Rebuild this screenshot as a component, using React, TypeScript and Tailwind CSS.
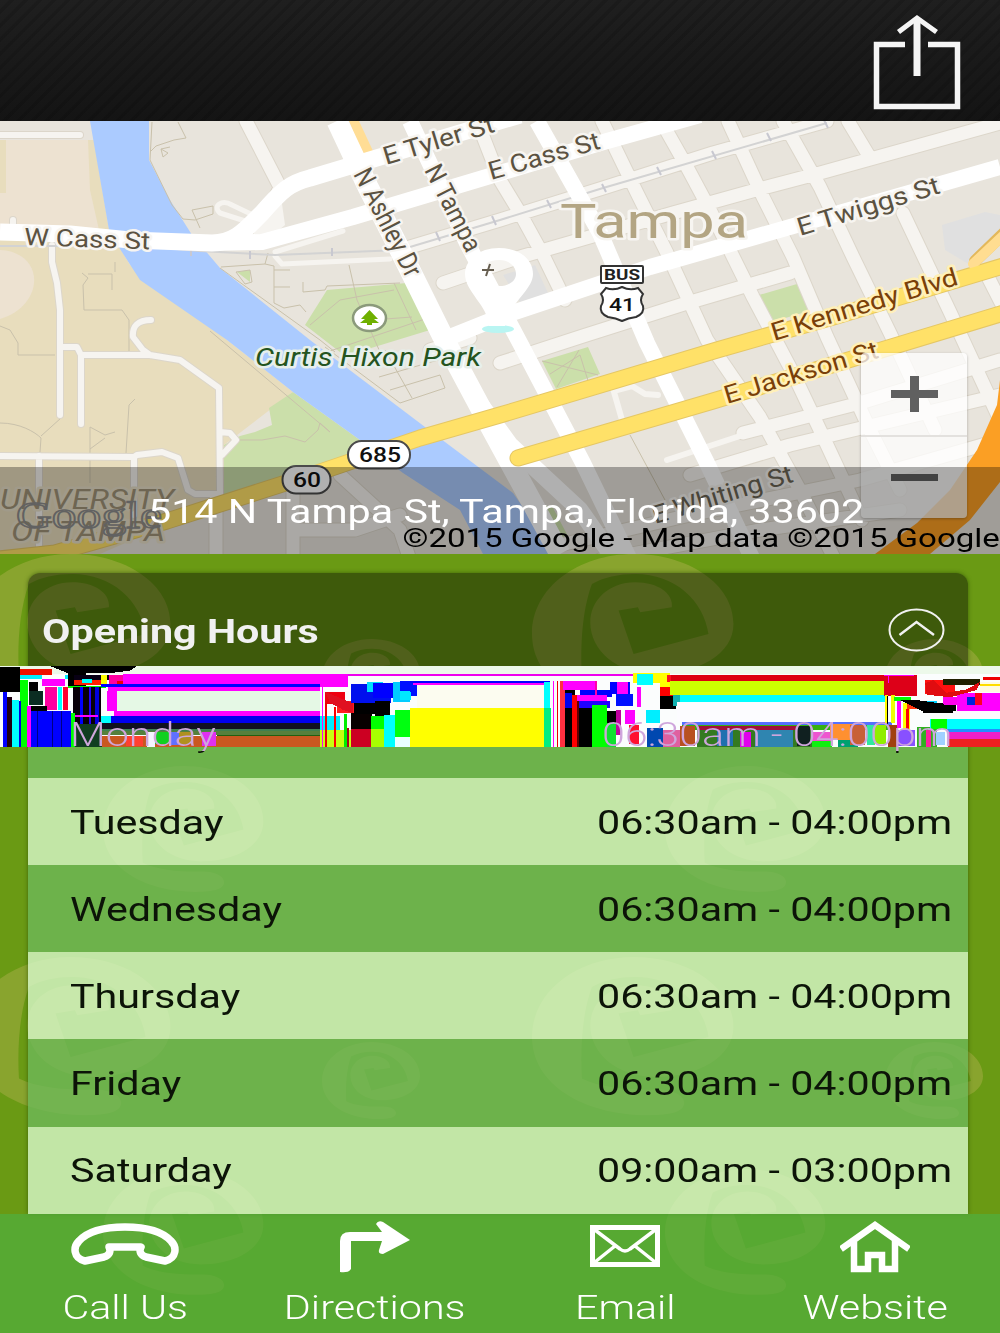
import type { ReactNode } from 'react'

interface Hours {
  day: string
  time: string
}

interface LabelProps {
  x: number
  y: number
  w: number
  size: number
  rotate?: number
  color?: string
  halo?: string
  italic?: boolean
  weight?: number
  children: string
}

const hours: Hours[] = [
  { day: 'Monday', time: '06:30am - 04:00pm' },
  { day: 'Tuesday', time: '06:30am - 04:00pm' },
  { day: 'Wednesday', time: '06:30am - 04:00pm' },
  { day: 'Thursday', time: '06:30am - 04:00pm' },
  { day: 'Friday', time: '06:30am - 04:00pm' },
  { day: 'Saturday', time: '09:00am - 03:00pm' },
]

const minorRoads = [
  'M246 121L280 187L268 215',
  'M477 121L500 180L520 213L543 255L565 300',
  'M602 121L637 193L667 253L707 340L760 417L800 490L835 560',
  'M661 121L687 167L710 210L753 297L793 373L820 430L862 520',
  'M728 121L763 197L793 257L827 337L870 430L900 490',
  'M783 121L820 187L853 257L890 333L935 430',
  'M848 121L869 156',
  'M903 213L950 312L1000 420',
  'M987 275L1010 320',
  'M400 250L500 220L603 188L713 153L827 121',
  'M443 283L520 257L673 213L763 188L820 173L1000 123',
  'M500 363L583 336L687 303L790 273',
  'M430 350L470 338',
  'M743 433L860 403L1000 360',
  'M690 475L790 445L1000 395',
  'M560 545L690 515L860 480L1000 440',
  'M600 560L760 530L900 510',
  'M340 475L400 530L410 560',
  'M300 530L355 530L400 515',
  'M216 500L216 560',
  'M293 490L293 560',
]

const whiteRoads = [
  'M410 121L467 243L520 343L583 463L630 560',
  'M537 121L600 233L647 343L707 463L753 560',
  'M445 339L500 317L650 267L1000 167',
]

const campusRoads = [
  'M0 135L80 135',
  'M52 245L52 262L57 283L60 310L60 415',
  'M60 347L77 347L81 355L81 424',
  'M81 355L150 355L180 360L219 388L220 494L195 494L188 490L178 458L162 452L137 455L134 457L0 456',
  'M151 320C138 320 132 326 133 337L143 350L150 355',
  'M220 432L230 433L236 440L222 455',
  'M39 456L39 546',
  'M134 457L134 515',
  'M13 220L13 235',
]

const footpaths = [
  'M152 122L150 160L172 205L183 219L195 220L213 214L213 206L192 210L200 228',
  'M150 152L156 146L174 140L186 138L178 122',
  'M161 149L168 153L163 157L161 149L170 147',
  'M220 268L320 340L335 352',
  'M221 267L265 264L268 253M265 264L274 266L274 303',
  'M236 272L250 270L252 282L245 284Z',
  'M274 270L290 270M274 287L290 287M303 282L303 292L325 290L327 286L400 283',
  'M349 265L357 300L380 352',
  'M310 325L340 300L394 290M327 352L428 318M394 283L416 330M372 320L412 317',
  'M274 303L284 308L300 305L306 312',
  'M82 273L88 278L83 285L84 310L122 310L129 320L129 352M88 274L112 274L112 290M115 262L115 272',
  'M0 326L10 330L18 343L18 355L55 355',
  'M0 423C20 423 35 432 41 438L40 452M61 418L41 436',
  'M90 427L90 483M90 427L105 435L115 432M90 449L105 438M126 453L129 405L135 399',
  'M240 440L262 440L285 436L305 442L318 430L320 423L330 432',
  'M210 331L330 432',
  'M379 377L445 358M390 390L440 375L445 388L400 403L325 347M385 350L412 398',
  'M550 374L580 355L590 387M542 361L598 375M579 350L557 387',
  'M630 435L665 500M955 333L970 362',
]

// coloured noise of the damaged frame: [x, y, width, height, colour]
const noise: [number, number, number, number, string][] = [
  [0, 18, 3000, 24, '#edf9ea'],
  [0, 42, 3000, 220, '#fbfdfd'],
  [0, 20, 60, 75, '#000000'],
  [60, 26, 95, 22, '#ee1100'],
  [60, 46, 160, 12, '#00eeff'],
  [60, 60, 25, 202, '#00ff00'],
  [10, 95, 12, 167, '#0000ff'],
  [22, 110, 14, 152, '#200010'],
  [36, 120, 20, 142, '#00ffff'],
  [56, 122, 6, 140, '#0000dd'],
  [88, 66, 25, 50, '#000000'],
  [88, 92, 40, 44, '#0b2d22'],
  [126, 46, 70, 12, '#ffffff'],
  [126, 58, 70, 20, '#ff00ff'],
  [136, 80, 36, 70, '#ff00a0'],
  [174, 80, 12, 70, '#00ffff'],
  [188, 80, 16, 70, '#ff0030'],
  [92, 138, 50, 18, '#000000'],
  [92, 154, 122, 108, '#0000ff'],
  [80, 138, 12, 124, '#ff00ff'],
  [110, 154, 3, 108, '#000080'],
  [155, 154, 3, 108, '#000080'],
  [184, 154, 3, 108, '#000080'],
  [204, 40, 55, 42, '#000000'],
  [222, 46, 110, 14, '#080014'],
  [222, 60, 80, 16, '#ff2200'],
  [245, 58, 30, 12, '#00ffff'],
  [204, 78, 115, 5, '#00ff00'],
  [220, 82, 84, 110, '#080008'],
  [240, 82, 10, 110, '#0000ff'],
  [268, 82, 6, 110, '#2200ff'],
  [286, 82, 12, 110, '#0000dd'],
  [225, 164, 70, 6, '#ff00ff'],
  [214, 158, 12, 104, '#00ff00'],
  [304, 46, 16, 34, '#ffff00'],
  [328, 44, 40, 36, '#ff00a0'],
  [352, 62, 28, 22, '#ee0000'],
  [368, 42, 592, 30, '#ff00ff'],
  [304, 72, 656, 8, '#0000ff'],
  [325, 80, 635, 12, '#ff00ff'],
  [345, 92, 615, 60, '#e5f8e5'],
  [322, 94, 28, 60, '#ff00ff'],
  [342, 152, 618, 16, '#ff00ff'],
  [304, 168, 656, 22, '#0000ee'],
  [304, 168, 30, 22, '#00ffff'],
  [304, 190, 656, 17, '#101020'],
  [304, 207, 656, 6, '#3d8050'],
  [304, 213, 656, 12, '#55803c'],
  [650, 225, 310, 4, '#206010'],
  [304, 229, 656, 33, '#c95820'],
  [225, 193, 80, 69, '#103d20'],
  [378, 227, 50, 30, '#ff4030'],
  [440, 215, 24, 46, '#f4f4ff'],
  [464, 215, 42, 36, '#10d020'],
  [506, 215, 30, 40, '#6070ff'],
  [536, 215, 38, 38, '#b09020'],
  [605, 215, 43, 44, '#e030f0'],
  [960, 42, 85, 40, '#ff00ff'],
  [1045, 42, 860, 5, '#ee00ee'],
  [962, 82, 85, 12, '#ffffff'],
  [975, 95, 60, 38, '#ee0010'],
  [1010, 122, 52, 38, '#ff2020'],
  [960, 168, 60, 42, '#00eeff'],
  [960, 210, 92, 52, '#c8ff10'],
  [966, 82, 3, 180, '#ff00ff'],
  [976, 130, 4, 132, '#ee0000'],
  [1002, 140, 6, 122, '#ff0000'],
  [1032, 162, 10, 100, '#00ee00'],
  [1040, 205, 8, 57, '#aa0020'],
  [1053, 160, 62, 102, '#080000'],
  [1053, 206, 60, 56, '#cc0022'],
  [1053, 72, 120, 56, '#0010ee'],
  [1062, 130, 70, 32, '#000000'],
  [1100, 66, 50, 30, '#00ddff'],
  [1120, 68, 90, 46, '#0000ff'],
  [1180, 66, 50, 60, '#00ccff'],
  [1200, 62, 50, 46, '#0010ff'],
  [1125, 124, 44, 46, '#000000'],
  [1112, 168, 120, 94, '#00ff00'],
  [1112, 206, 118, 56, '#a8ff00'],
  [1152, 164, 34, 98, '#00ffff'],
  [1186, 150, 44, 112, '#00ff10'],
  [1186, 230, 44, 32, '#eaffff'],
  [1200, 94, 32, 26, '#00e8ff'],
  [1230, 62, 420, 8, '#0000ff'],
  [1240, 70, 400, 5, '#ff00ff'],
  [1250, 75, 382, 69, '#fcfcf0'],
  [1230, 144, 402, 118, '#ffff00'],
  [1632, 66, 18, 78, '#00ffff'],
  [1632, 144, 20, 118, '#00ee80'],
  [1660, 64, 3, 198, '#ff00ff'],
  [1670, 64, 4, 198, '#ee0000'],
  [1680, 64, 14, 198, '#ff3040'],
  [1690, 64, 95, 26, '#ff00ff'],
  [1694, 90, 30, 172, '#000000'],
  [1716, 106, 18, 156, '#ff0000'],
  [1732, 106, 6, 156, '#600000'],
  [1740, 90, 95, 20, '#0000ff'],
  [1730, 106, 90, 16, '#ff00ff'],
  [1696, 100, 20, 44, '#0000ee'],
  [1736, 122, 95, 22, '#2000ff'],
  [1736, 144, 42, 118, '#000000'],
  [1776, 134, 44, 128, '#00ff00'],
  [1784, 64, 8, 42, '#ff00aa'],
  [1830, 66, 60, 36, '#0000ff'],
  [1850, 66, 34, 36, '#ff00ff'],
  [1820, 154, 28, 34, '#000000'],
  [1820, 188, 28, 74, '#10e030'],
  [1848, 150, 20, 76, '#c000a0'],
  [1848, 102, 50, 35, '#0010ff'],
  [1862, 142, 10, 90, '#ffffff'],
  [1875, 150, 30, 42, '#ff00ff'],
  [1888, 195, 30, 58, '#ff1030'],
  [1900, 38, 80, 30, '#ffff00'],
  [1910, 42, 48, 34, '#00ffff'],
  [1912, 80, 10, 60, '#ff00ff'],
  [1938, 150, 42, 40, '#00eeff'],
  [1940, 205, 50, 57, '#0048b0'],
  [1980, 38, 30, 58, '#ffff00'],
  [1980, 80, 42, 30, '#ff0000'],
  [1980, 108, 48, 40, '#000000'],
  [2020, 88, 22, 50, '#10b0b0'],
  [2002, 45, 24, 22, '#ff1020'],
  [2012, 45, 650, 18, '#dd0010'],
  [2010, 64, 644, 40, '#ccff00'],
  [2040, 106, 625, 20, '#00ffff'],
  [2030, 126, 620, 60, '#fcfcff'],
  [2045, 187, 630, 8, '#5570ff'],
  [2045, 195, 630, 14, '#35b010'],
  [2090, 197, 300, 12, '#a01038'],
  [2090, 209, 350, 53, '#347a20'],
  [1988, 209, 52, 53, '#e060a0'],
  [2040, 197, 46, 60, '#b85020'],
  [2150, 209, 50, 48, '#2070b0'],
  [2220, 215, 34, 47, '#e000ee'],
  [2264, 209, 116, 53, '#2f85b0'],
  [2390, 197, 40, 60, '#102020'],
  [2435, 215, 60, 28, '#ee55d0'],
  [2435, 243, 60, 19, '#10f010'],
  [2490, 193, 68, 46, '#ff9030'],
  [2515, 239, 60, 23, '#00a070'],
  [2550, 195, 46, 60, '#c86038'],
  [2600, 195, 26, 60, '#30e8a0'],
  [2622, 195, 36, 58, '#90ee00'],
  [2652, 45, 100, 62, '#dd0018'],
  [2652, 45, 90, 4, '#ff00ff'],
  [2664, 45, 4, 25, '#ff00ff'],
  [2654, 106, 10, 84, '#ffff00'],
  [2672, 106, 12, 84, '#eeff00'],
  [2662, 108, 3, 90, '#000000'],
  [2682, 110, 50, 14, '#00ff00'],
  [2692, 124, 10, 80, '#ff00ff'],
  [2710, 130, 20, 80, '#ffff00'],
  [2718, 146, 8, 60, '#ff0000'],
  [2664, 195, 26, 67, '#a04010'],
  [2695, 209, 50, 50, '#8850ff'],
  [2750, 200, 60, 62, '#30b020'],
  [2778, 209, 14, 53, '#ff20a0'],
  [2808, 215, 26, 40, '#a0d0ff'],
  [2750, 124, 60, 5, '#00d0ff'],
  [2776, 60, 90, 42, '#ff1010'],
  [2830, 58, 110, 18, '#202000'],
  [2720, 126, 70, 22, '#ff3810'],
  [2768, 130, 100, 30, '#000000'],
  [2830, 112, 110, 22, '#ff00ee'],
  [2870, 100, 130, 52, '#ff00ff'],
  [2900, 110, 26, 25, '#0020dd'],
  [2925, 98, 20, 38, '#ff0020'],
  [2950, 52, 50, 8, '#ee0000'],
  [2940, 66, 60, 30, '#fffbe0'],
  [2940, 72, 60, 6, '#ffdd00'],
  [2860, 152, 140, 24, '#fdfaff'],
  [2790, 176, 210, 32, '#00ffff'],
  [2792, 176, 50, 32, '#00ff00'],
  [2840, 208, 160, 8, '#2090ff'],
  [2845, 216, 155, 22, '#ee20c8'],
  [2845, 238, 155, 24, '#ee2020'],
]

const markPath =
  'M305 0C470 0 605 90 605 210C605 300 500 360 370 360C255 360 175 290 175 205C175 140 230 85 310 85C380 85 425 120 420 160L325 175L318 160L260 170L305 300L530 240C515 140 430 60 310 60C260 60 215 70 180 90C150 170 145 280 150 365C210 395 300 400 380 398C420 398 457 415 457 438C457 465 420 475 350 475C150 475 0 380 0 240C0 100 140 0 305 0Z'

const marks: [number, number, number][] = [
  [-31, 0, 0.333],
  [532, 0, 0.333],
  [322, 85, 0.162],
  [885, 85, 0.162],
  [103, 212, 0.265],
  [665, 212, 0.265],
  [-31, 403, 0.333],
  [532, 403, 0.333],
  [322, 488, 0.162],
  [885, 488, 0.162],
  [103, 615, 0.265],
  [665, 615, 0.265],
]

function Label({ x, y, w, size, rotate = 0, color = '#5b5241', halo = '#f7f5f1', italic, weight = 400, children }: LabelProps) {
  return (
    <text
      transform={`translate(${x} ${y}) rotate(${rotate})`}
      textLength={w}
      lengthAdjust="spacingAndGlyphs"
      fontFamily="Roboto, sans-serif"
      fontSize={size}
      fontWeight={weight}
      fontStyle={italic ? 'italic' : 'normal'}
      fill={color}
      stroke={halo}
      strokeWidth={halo === 'none' ? 0 : 5}
      strokeLinejoin="round"
      paintOrder="stroke"
    >
      {children}
    </text>
  )
}

function ParkMap() {
  return (
    <svg className="block h-full w-full" viewBox="0 121 1000 433" preserveAspectRatio="none" fill="none">
      <rect y="121" width="1000" height="433" fill="#e8e4dc" />
      <path d="M0 228H108L130 265L227 340L293 392L224 445V500L100 554H0Z" fill="#e8ddbd" />
      <path d="M0 140H93L108 232H0Z" fill="#ede2d1" />
      <path d="M88 140H94L109 230H99L90 190ZM0 140H6V193H0Z" fill="#e8ddbd" />
      <path d="M0 250C45 252 46 305 0 319Z" fill="#ede2d1" />
      <path d="M293 392L269 408L272 425L255 432L240 436L224 445V500L370 455L360 440Z" fill="#cbdfaa" />
      <path d="M90 121L109 230L120 249L140 280L227 340L293 392L360 440L403 473L460 510L483 554H550L532 520L513 493L425 427L310 340L220 268L192 235L170 200L149 160V121Z" fill="#abcbff" />
      <path d="M327 290L407 283L430 330L345 356L305 325ZM237 272L250 270V282ZM542 361L588 347L600 374L556 389ZM759 295L797 284L809 311L772 322ZM530 506L552 506L570 540L545 545Z" fill="#cbdfaa" />
      <path d="M942 225L985 212L1000 215V240L970 265L945 250ZM503 275L535 265L548 293L520 302Z" fill="#e0e0e0" />

      <g stroke="#c9c1ab" strokeWidth="1">
        {footpaths.map((d) => (
          <path key={d} d={d} />
        ))}
      </g>
      <g stroke="#dcd6ca" strokeLinejoin="round" strokeLinecap="round">
        <path d={minorRoads.join('')} strokeWidth="15" />
        <path d={campusRoads.join('')} strokeWidth="8" />
      </g>
      <g stroke="#f6f4f0" strokeLinejoin="round" strokeLinecap="round">
        <path d={minorRoads.join('')} strokeWidth="13" />
        <path d={campusRoads.join('')} strokeWidth="6" />
        <path d="M667 460L740 436M617 390L632 386L645 394L658 395M612 385L622 420" strokeWidth="6" />
        <path d="M275 256L282 264L390 259M275 252L343 231M245 221L220 213C212 206 222 199 232 205L255 216" strokeWidth="5" />
      </g>
      <path d="M253 216L280 190L285 225L255 250Z" fill="#f6f4f0" />
      <path d="M0 246L140 246L200 251L275 255L400 250L440 238L500 220L603 188L827 123" stroke="#d3d3d3" strokeWidth="2" />
      <path d="M191 248V256M250 251V259M332 248V256M436 232L440 241M492 216L496 225M547 200L551 208M602 184L606 192M657 167L661 175M712 151L716 159M767 133L771 141M824 120L828 128" stroke="#c8c8d0" strokeWidth="2" />

      <path d="M349 121H359L373 151L362 154Z" fill="#ffdd95" />
      <g stroke="#ffffff" strokeLinejoin="round">
        <path d={whiteRoads.join('')} strokeWidth="16" />
        <path d="M337 121L368 187L405 260L447 345L487 420L560 554" strokeWidth="21" />
        <path d="M470 390L510 445L580 510L615 560" strokeWidth="17" />
        <path d="M0 232L70 234L130 240L212 243C235 243 245 230 262 213C282 190 290 183 310 178L520 115" strokeWidth="17" />
        <path d="M210 243L262 242L353 217L500 173L600 143L700 115" strokeWidth="16" />
      </g>
      <g strokeLinejoin="round" strokeLinecap="round">
        <path d="M-10 560L55 553L167 521L317 473L420 438L500 415L717 350L833 317L1010 264M518 458L713 401L1010 311" stroke="#e5c765" strokeWidth="17" />
        <path d="M975 261L1005 232" stroke="#e3b85c" strokeWidth="12" />
        <path d="M973 264L1005 234" stroke="#ffdd91" strokeWidth="10" />
        <path d="M-10 560L55 553L167 521L317 473L420 438L500 415L717 350L833 317L1010 264M518 458L713 401L1010 311" stroke="#ffe168" strokeWidth="15" />
      </g>
      <path d="M1000 380L997 405L977 450L950 490L917 523L875 554H930L970 520L1000 482Z" fill="#fb9f24" />

      <Label x={24} y={245} w={126} size={24} rotate={2}>W Cass St</Label>
      <Label x={386} y={165} w={115} size={25} rotate={-17}>E Tyler St</Label>
      <Label x={491} y={180} w={115} size={25} rotate={-16}>E Cass St</Label>
      <Label x={353} y={174} w={118} size={27} rotate={63}>N Ashley Dr</Label>
      <Label x={424} y={170} w={94} size={26} rotate={63}>N Tampa</Label>
      <Label x={800} y={236} w={148} size={25} rotate={-17}>E Twiggs St</Label>
      <Label x={774} y={341} w={194} size={25} rotate={-17} color="#7a4008" halo="#fff0b8">E Kennedy Blvd</Label>
      <Label x={727} y={404} w={160} size={25} rotate={-17} color="#7a4008" halo="#fff0b8">E Jackson St</Label>
      <Label x={655} y={524} w={146} size={25} rotate={-17} color="#6b6454">E Whiting St</Label>
      <Label x={560} y={238} w={188} size={49} color="#b3a583">Tampa</Label>
      <Label x={255} y={366} w={226} size={26} color="#245420" halo="#e7efeb" italic>Curtis Hixon Park</Label>
      <Label x={0} y={509} w={174} size={27} color="#a09377" halo="#e8e0c8" italic>UNIVERSITY</Label>
      <Label x={11} y={541} w={154} size={27} color="#a09377" halo="#e8e0c8" italic>OF TAMPA</Label>

      <ellipse cx="369.500" cy="318" rx="16.500" ry="13" fill="#fff" stroke="#8b9a7b" strokeWidth="2.500" />
      <path d="M369.500 310L378 319H374L379 323H372V325H367V323H360L365 319H361Z" fill="#6fb000" />

      <rect x="348" y="441" width="62" height="27.500" rx="13.500" fill="#fff" stroke="#4b4b4b" strokeWidth="2" />
      <Label x={359} y={462} w={42} size={20} color="#111" halo="none" weight={500}>685</Label>
      <rect x="282.500" y="466" width="48" height="27.500" rx="13.500" fill="#fff" stroke="#4b4b4b" strokeWidth="2" />
      <Label x={293} y={487} w={28} size={20} color="#111" halo="none" weight={500}>60</Label>
      <rect x="601" y="266" width="42" height="17" rx="1" fill="#fff" stroke="#333" strokeWidth="2" />
      <Label x={604} y={280} w={36} size={15} color="#222" halo="none" weight={700}>BUS</Label>
      <path d="M606 288Q614 291 622 287Q630 291 638 288L643 294Q639 300 643 306Q645 313 636 317Q628 318 622 321Q616 318 608 317Q599 313 601 306Q605 300 601 294Z" fill="#fff" stroke="#333" strokeWidth="2" />
      <Label x={609} y={311} w={26} size={19} color="#111" halo="none" weight={500}>41</Label>

      <ellipse cx="498" cy="329" rx="16" ry="4" fill="#b9f5f2" />
      <path fillRule="evenodd" d="M499 248C519 248 533 259 533 274C533 290 510 302 505 326H489C488 305 465 292 465 274C465 259 480 248 499 248ZM499 260C488 260 481 266 481 274C481 281 489 286 499 286C509 286 516 281 516 274C516 266 509 260 499 260Z" fill="#fff" />
      <path d="M482 270H494M490 264L486 276" stroke="#665e50" strokeWidth="2" />
      <text x="16" y="528" textLength="146" lengthAdjust="spacingAndGlyphs" fontFamily="'Liberation Serif', serif" fontSize="37" fill="none" stroke="#8d8d8d" strokeWidth="1.500">Google</text>
    </svg>
  )
}

function ShareIcon() {
  return (
    <svg className="h-[98px] w-[92px]" viewBox="0 0 92 98" fill="none" stroke="#f5f5f5">
      <path d="M35 30.500H6.500V92.500H87.500V30.500H58" strokeWidth="5.500" />
      <path d="M47 62V5" strokeWidth="7" />
      <path d="M28.500 18L47 4L66.500 18" strokeWidth="5" />
    </svg>
  )
}

function BrokenFrame() {
  return (
    <div className="absolute inset-x-0 top-[112px] z-10 h-[81px]">
      <svg className="block h-full w-full" viewBox="0 18 3000 243" preserveAspectRatio="none" shapeRendering="crispEdges">
        {noise.map(([x, y, w, h, fill], i) => (
          <rect key={i} x={x} y={y} width={w} height={h} fill={fill} />
        ))}
        <path d="M150 18H410L390 32L340 38H200L170 26Z" fill="#000" />
        <path d="M975 95L990 128L1030 150L1060 160V130L1030 118Z" fill="#e01020" />
        <path d="M1230 75L1250 75L1230 98Z" fill="#0010ff" />
        <path d="M2700 120L2780 160L2850 158L2870 145L2820 130L2750 120Z" fill="#000" />
        <path d="M2776 70L2800 60L2840 98L2900 88L2940 66L2930 90L2850 112L2780 104Z" fill="#e00c10" />
      </svg>
    </div>
  )
}

function Action({ label, children }: { label: string; children: ReactNode }) {
  return (
    <div className="flex flex-1 flex-col items-center">
      <div className="flex h-[65px] items-center justify-center">{children}</div>
      <span className="mt-[7px] scale-x-[1.25] text-[33px] leading-[44px] font-light whitespace-nowrap">{label}</span>
    </div>
  )
}

export default function App() {
  return (
    <div className="relative h-[1333px] w-[1000px] overflow-hidden bg-[#6a9a14] font-['Roboto',sans-serif]">
      <header className="flex h-[121px] justify-end bg-[repeating-linear-gradient(135deg,#0000_0_6px,#0002_7px_10px),linear-gradient(#1f1f1f,#141414)] pt-[14px] pr-[38px]">
        <ShareIcon />
      </header>

      <section className="relative h-[433px] overflow-hidden">
        <ParkMap />
        <div className="absolute top-[232px] left-[861px] flex h-[165px] w-[106px] flex-col rounded-sm bg-white/75 shadow-[0_1px_3px_#0004]">
          <div className="flex flex-1 items-center justify-center border-b-2 border-[#e3e1de]">
            <svg className="h-[36px] w-[47px]" viewBox="0 0 47 36" fill="#606060">
              <path d="M19 0H28V14H47V22H28V36H19V22H0V14H19Z" />
            </svg>
          </div>
          <div className="flex flex-1 items-center justify-center">
            <div className="h-[7px] w-[47px] bg-[#606060]" />
          </div>
        </div>
        <div className="absolute inset-x-0 bottom-0 h-[87px] bg-black/31">
          <p className="absolute top-[24px] left-[148px] origin-left scale-x-[1.25] text-[33px] leading-[42px] whitespace-nowrap text-white">514 N Tampa St, Tampa, Florida, 33602</p>
          <p className="absolute right-0 bottom-0 origin-right scale-x-[1.25] text-[26.4px] leading-[32px] whitespace-nowrap text-black">©2015 Google - Map data ©2015 Google</p>
        </div>
      </section>

      <div className="relative flex h-[779px] flex-col">
        <svg className="absolute inset-0 h-full w-full" viewBox="0 0 1000 779" fill="#e6c27c" fillOpacity=".25">
          {marks.map(([x, y, s]) => (
            <path key={`${x}-${y}`} d={markPath} transform={`translate(${x} ${y}) scale(${s})`} />
          ))}
        </svg>

        <section className="relative mt-[19px] mr-[32px] ml-[28px] h-[641px] overflow-hidden rounded-t-xl shadow-[0_0_4px_#2a4a00aa]">
          <div className="flex h-[117.6px] items-center justify-between bg-black/41 pr-[23px] pl-[14px]">
            <h2 className="origin-left scale-x-[1.25] text-[33px] font-bold text-[#f1f1f1]">Opening Hours</h2>
            <svg className="-mt-[4px] h-[44px] w-[57px]" viewBox="0 0 57 44" fill="none" stroke="#f1f1f1" strokeWidth="2">
              <ellipse cx="28.500" cy="22" rx="27" ry="20.500" />
              <path d="M11.500 27L28.500 14L46 27" strokeWidth="2.500" />
            </svg>
          </div>
          <ul>
            {hours.map((row) => (
              <li
                key={row.day}
                className="group flex h-[87.2px] items-center justify-between bg-[#6eb859]/80 pt-[2px] pr-[16px] pl-[42px] text-[33px] text-[#0c1408] even:bg-[#d8f9cb]/80"
              >
                <span className="z-20 origin-left scale-x-[1.25] group-first:bg-[linear-gradient(#cfa6dc_82%,#0c1408_82%)] group-first:bg-clip-text group-first:font-light group-first:text-transparent">
                  {row.day}
                </span>
                <span className="z-20 origin-right scale-x-[1.25] group-first:bg-[linear-gradient(#cfa6dc_82%,#0c1408_82%)] group-first:bg-clip-text group-first:font-light group-first:text-transparent">
                  {row.time}
                </span>
              </li>
            ))}
          </ul>
        </section>

        <footer className="relative flex h-[119px] bg-[#52ad3c]/75 text-white">
          <Action label="Call Us">
            <svg className="-mt-[6px] h-[44px] w-[110px]" viewBox="0 0 110 44" fill="none" stroke="#fff" strokeWidth="7.500" strokeLinejoin="round">
              <path d="M15 39C3 36 3 25 9 19C18 9 34 5 55 5S92 9 101 19C107 25 107 36 95 39L76 35C70 33 69 29 71 25H39C41 29 40 33 34 35Z" />
            </svg>
          </Action>
          <Action label="Directions">
            <svg className="h-[52px] w-[70px]" viewBox="0 0 70 52" fill="#fff">
              <path d="M0 51V20Q0 11 10 11H42L36 3Q38-1 43 1L70 19L43 33Q38 33 39 29L42 20H11V48Q9 52 0 51Z" />
            </svg>
          </Action>
          <Action label="Email">
            <svg className="-mt-[2px] h-[42px] w-[70px]" viewBox="0 0 70 42" fill="none" stroke="#fff" strokeWidth="4">
              <rect x="2.500" y="2.500" width="65" height="37" strokeWidth="5" />
              <path d="M5 5L30 24Q35 28 40 24L65 5M5 37L25 21M65 37L45 21" strokeWidth="3.500" />
            </svg>
          </Action>
          <Action label="Website">
            <svg className="h-[52px] w-[70px]" viewBox="0 0 70 52" fill="none" stroke="#fff" strokeWidth="6.500">
              <path d="M1 28L35 4L69 28M14 20V48H28V34H42V48H55V20" />
            </svg>
          </Action>
        </footer>

        <BrokenFrame />
      </div>
    </div>
  )
}
